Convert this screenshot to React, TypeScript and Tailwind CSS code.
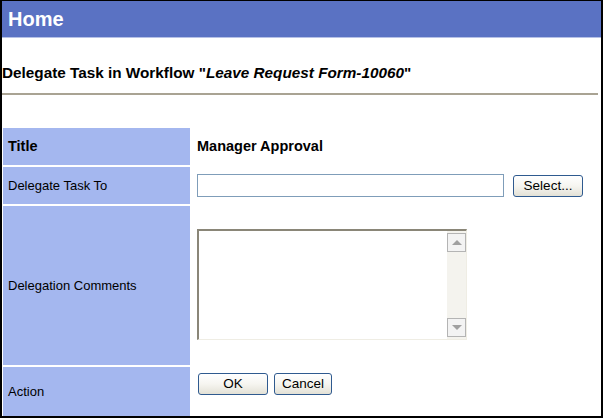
import React from "react";

const font = { fontFamily: '"Liberation Sans", Arial, sans-serif' };

function XPButton({ children, w }: { children: React.ReactNode; w: string }) {
  return (
    <button
      className={`${w} h-[22px] rounded-[3px] border border-[#2f5a8f] bg-linear-to-b from-white via-[#f6f5f0] to-[#e3e1d6] text-[13.5px] text-black leading-none flex items-center justify-center`}
    >
      {children}
    </button>
  );
}

export default function App() {
  return (
    <div
      style={font}
      className="w-[603px] h-[418px] bg-white border-t border-l-2 border-r-2 border-b-2 border-black flex flex-col overflow-hidden text-black"
    >
      <div className="h-[36px] bg-[#5a72c3] flex items-center pl-[6px] shrink-0">
        <span className="text-white font-bold text-[20px] leading-none">Home</span>
      </div>
      <div className="h-px bg-[#b6c1e6] shrink-0" />
      <div className="mt-[26px] h-[18px] leading-[18px] text-[15.3px] font-bold whitespace-nowrap shrink-0">
        Delegate Task in Workflow "<i>Leave Request Form-10060</i>"
      </div>
      <div className="mt-[11px] h-[2px] bg-[#a9a393] mr-[3px] shrink-0" />
      <div className="mt-[33px] ml-px grid grid-cols-[187px_1fr] grid-rows-[37px_37px_159px_1fr] gap-y-[2px] flex-1 text-[13px]">
        <div className="bg-[#a4b7ef] flex items-center pl-[5px] font-bold text-[14.5px]">Title</div>
        <div className="flex items-center pl-[7px] font-bold text-[14.5px]">Manager Approval</div>

        <div className="bg-[#a4b7ef] flex items-center pl-[5px]">Delegate Task To</div>
        <div className="flex items-center pl-[7px]">
          <div className="w-[307px] h-[23px] border border-[#7f9db9] bg-white" />
          <div className="ml-[9px]">
            <XPButton w="w-[70px]">Select...</XPButton>
          </div>
        </div>

        <div className="bg-[#a4b7ef] flex items-center pl-[5px]">Delegation Comments</div>
        <div className="pl-[7px] pt-[23px]">
          <div className="w-[270px] h-[111px] border-t-2 border-l-2 border-r border-b border-t-[#8a8678] border-l-[#8a8678] border-r-[#efede4] border-b-[#efede4] bg-white flex justify-end">
            <div className="w-[19px] h-full bg-[#f4f3ee] flex flex-col justify-between py-[2px] pr-px">
              <div className="w-[19px] h-[19px] border border-[#b4b4b4] bg-[#f3f3f3] flex items-center justify-center">
                <div className="w-0 h-0 border-l-[5px] border-r-[5px] border-b-[5px] border-l-transparent border-r-transparent border-b-[#a0a0a0]" />
              </div>
              <div className="w-[19px] h-[19px] border border-[#b4b4b4] bg-[#f3f3f3] flex items-center justify-center">
                <div className="w-0 h-0 border-l-[5px] border-r-[5px] border-t-[5px] border-l-transparent border-r-transparent border-t-[#a0a0a0]" />
              </div>
            </div>
          </div>
        </div>

        <div className="bg-[#a4b7ef] flex items-center pl-[5px]">Action</div>
        <div className="flex items-start pt-[6px] pl-[8px] gap-[6px]">
          <XPButton w="w-[70px]">OK</XPButton>
          <XPButton w="w-[58px]">Cancel</XPButton>
        </div>
      </div>
    </div>
  );
}
